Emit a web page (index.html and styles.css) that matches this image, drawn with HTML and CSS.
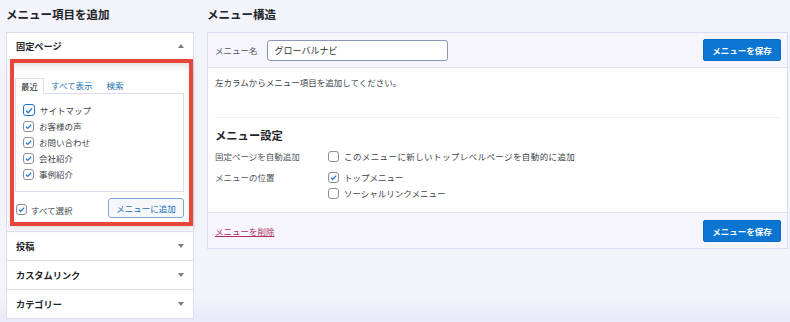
FILE: index.html
```html
<!DOCTYPE html>
<html lang="ja">
<head>
<meta charset="UTF-8" />
<meta name="viewport" content="width=device-width, initial-scale=1" />
<title>メニュー</title>
<link rel="stylesheet" href="styles.css">
</head>
<body>

<div class="page">

  <!-- Left column -->
  <section class="col-left">
    <h2 class="col-title">メニュー項目を追加</h2>

    <div class="accordion">
      <div class="acc-section open">
        <div class="acc-head">固定ページ<span class="arrow up"></span></div>
        <div class="acc-body">
          <div class="callout">
            <div class="tabs">
              <span class="tab active">最近</span>
              <span class="tab">すべて表示</span>
              <span class="tab">検索</span>
            </div>
            <ul class="tab-panel">
              <li><span class="cb checked focus"><svg viewBox="0 0 12 12"><path d="M2.6 6.2 L5 8.6 L9.6 3.4"/></svg></span>サイトマップ</li>
              <li><span class="cb checked"><svg viewBox="0 0 12 12"><path d="M2.6 6.2 L5 8.6 L9.6 3.4"/></svg></span>お客様の声</li>
              <li><span class="cb checked"><svg viewBox="0 0 12 12"><path d="M2.6 6.2 L5 8.6 L9.6 3.4"/></svg></span>お問い合わせ</li>
              <li><span class="cb checked"><svg viewBox="0 0 12 12"><path d="M2.6 6.2 L5 8.6 L9.6 3.4"/></svg></span>会社紹介</li>
              <li><span class="cb checked"><svg viewBox="0 0 12 12"><path d="M2.6 6.2 L5 8.6 L9.6 3.4"/></svg></span>事例紹介</li>
            </ul>
            <div class="add-row">
              <label class="select-all"><span class="cb checked"><svg viewBox="0 0 12 12"><path d="M2.6 6.2 L5 8.6 L9.6 3.4"/></svg></span>すべて選択</label>
              <button class="btn-secondary">メニューに追加</button>
            </div>
          </div>
        </div>
      </div>
      <div class="acc-section">
        <div class="acc-head">投稿<span class="arrow"></span></div>
      </div>
      <div class="acc-section">
        <div class="acc-head">カスタムリンク<span class="arrow"></span></div>
      </div>
      <div class="acc-section">
        <div class="acc-head">カテゴリー<span class="arrow"></span></div>
      </div>
    </div>
  </section>

  <!-- Right column -->
  <section class="col-right">
    <h2 class="col-title">メニュー構造</h2>

    <div class="menu-box">
      <div class="menu-header">
        <label class="name-label">メニュー名</label>
        <input class="name-input" type="text" value="グローバルナビ">
        <button class="btn-primary">メニューを保存</button>
      </div>

      <div class="menu-body">
        <p class="hint">左カラムからメニュー項目を追加してください。</p>
        <hr class="sep">
        <h3 class="settings-title">メニュー設定</h3>
        <div class="settings">
          <div class="set-label">固定ページを自動追加</div>
          <div class="set-opts">
            <div class="opt wide"><span class="cb"></span>このメニューに新しいトップレベルページを自動的に追加</div>
          </div>
          <div class="set-label">メニューの位置</div>
          <div class="set-opts">
            <div class="opt"><span class="cb checked"><svg viewBox="0 0 12 12"><path d="M2.6 6.2 L5 8.6 L9.6 3.4"/></svg></span>トップメニュー</div>
            <div class="opt"><span class="cb"></span>ソーシャルリンクメニュー</div>
          </div>
        </div>
      </div>

      <div class="menu-footer">
        <a class="delete-link" href="#">メニューを削除</a>
        <button class="btn-primary">メニューを保存</button>
      </div>
    </div>
  </section>

</div>

</body>
</html>
```

FILE: styles.css
```css
/* Reset + basic */
* {
  box-sizing: border-box;
}
body {
  margin: 0;
  height: 322px;
  overflow: hidden;
  font-family: "Noto Sans CJK JP", "Noto Sans", sans-serif;
  font-size: 8.5px;
  color: #3c434a;
  background: linear-gradient(to bottom, #f3f3fc 0, #f3f3fc 300px, #e9e9f8 322px);
}

.page {
  display: flex;
  gap: 13px;
  padding: 0 2px 0 6px;
}

.col-title {
  margin: 0;
  height: 32px;
  line-height: 28px;
  font-size: 11.5px;
  font-weight: 700;
  color: #1d2327;
}

/* Left column */
.col-left {
  width: 188px;
  flex-shrink: 0;
}
.accordion {
  background: #fff;
  border: 1px solid #dcdcf0;
}
.acc-section + .acc-section {
  border-top: 1px solid #dcdcf0;
}
.acc-head {
  display: flex;
  align-items: center;
  justify-content: space-between;
  height: 28px;
  padding: 0 9px 0 9px;
  font-size: 9.2px;
  font-weight: 700;
  color: #1d2327;
}
.acc-section.open .acc-head {
  height: 26px;
}
.arrow {
  width: 0;
  height: 0;
  border-left: 3px solid transparent;
  border-right: 3px solid transparent;
  border-top: 4px solid #787c82;
}
.arrow.up {
  border-top: none;
  border-bottom: 4px solid #787c82;
}
.acc-body {
  padding: 0 0 5px 3px;
}

/* Red highlight */
.callout {
  border: 4px solid #e8453c;
  background: #fff;
  padding: 15px 5px 0 1px;
  box-shadow: inset 0 8px 8px -6px rgba(0, 0, 0, 0.15), 0 3px 6px rgba(0, 0, 0, 0.12);
}
.tabs {
  display: flex;
  height: 15px;
  line-height: 14px;
}
.tab {
  padding: 0 7px;
  color: #2271b1;
}
.tab.active {
  padding: 0 5px;
  color: #1d2327;
  border: 1px solid #dcdcf0;
  border-bottom: none;
  background: #fff;
  position: relative;
  z-index: 1;
  height: 16px;
}
.tab-panel {
  list-style: none;
  margin: 0;
  padding: 8px 8px 9px 7px;
  border: 1px solid #dcdcf0;
  color: #3c434a;
}
.tab-panel li {
  display: flex;
  align-items: center;
  height: 16px;
}

.cb {
  width: 11px;
  height: 11px;
  flex-shrink: 0;
  margin-right: 5px;
  border: 1px solid #8c8f94;
  border-radius: 3px;
  background: #fff;
  display: inline-flex;
  align-items: center;
  justify-content: center;
}
.cb svg {
  width: 11px;
  height: 11px;
  fill: none;
  stroke: #1a73d2;
  stroke-width: 1.6;
}
.cb.focus {
  width: 12px;
  height: 12px;
  border: 1.5px solid #1a73d2;
}

.add-row {
  display: flex;
  align-items: center;
  justify-content: space-between;
  height: 30px;
  padding: 0 0 0 1px;
}
.select-all {
  display: flex;
  align-items: center;
  margin-top: 5px;
  color: #3c434a;
}
.select-all .cb {
  margin-right: 4px;
}
.btn-secondary {
  font: inherit;
  height: 20px;
  width: 76px;
  padding: 0;
  margin-top: 2px;
  color: #2271b1;
  background: #f6f7fb;
  border: 1px solid #7fa6d6;
  border-radius: 3px;
}

/* Right column */
.col-right {
  flex: 1;
}
.menu-box {
  background: #fff;
  border: 1px solid #dcdcf0;
}
.menu-header {
  display: flex;
  align-items: center;
  height: 35px;
  padding: 0 6px 0 7px;
  background: #f6f5fd;
  border-bottom: 1px solid #e4e3f3;
}
.name-label {
  color: #50575e;
  margin-right: 9px;
}
.name-input {
  font: inherit;
  font-size: 9px;
  width: 181px;
  height: 21px;
  padding: 0 7px;
  color: #2c3338;
  border: 1px solid #8c95b5;
  border-radius: 3px;
  background: #fff;
}
.btn-primary {
  font: inherit;
  font-weight: 700;
  margin-left: auto;
  width: 78px;
  height: 22px;
  padding: 0;
  color: #fff;
  background: #0b76d1;
  border: 1px solid #0a6bc2;
  border-radius: 2px;
}

.menu-body {
  padding: 7px 7px 13px 7px;
}
.hint {
  margin: 0;
  line-height: 14px;
}
.sep {
  margin: 28px 0 0;
  border: none;
  border-top: 1px solid #eeeef6;
}
.settings-title {
  margin: 9px 0 0;
  line-height: 16px;
  font-size: 11.3px;
  font-weight: 700;
  color: #1d2327;
}
.settings {
  display: grid;
  grid-template-columns: 113px 1fr;
  row-gap: 9px;
  margin-top: 7px;
}
.set-label {
  color: #50575e;
  line-height: 12px;
}
.set-opts {
  display: flex;
  flex-direction: column;
  gap: 4px;
}
.opt {
  display: flex;
  align-items: center;
  line-height: 12px;
  color: #3c434a;
}
.opt .cb {
  margin-right: 5px;
}
.opt.wide {
  letter-spacing: 0.4px;
}

.menu-footer {
  display: flex;
  align-items: center;
  height: 36px;
  padding: 0 6px 0 7px;
  background: #f6f5fd;
  border-top: 1px solid #e4e3f3;
}
.delete-link {
  color: #b03060;
  text-decoration: underline;
}
```
